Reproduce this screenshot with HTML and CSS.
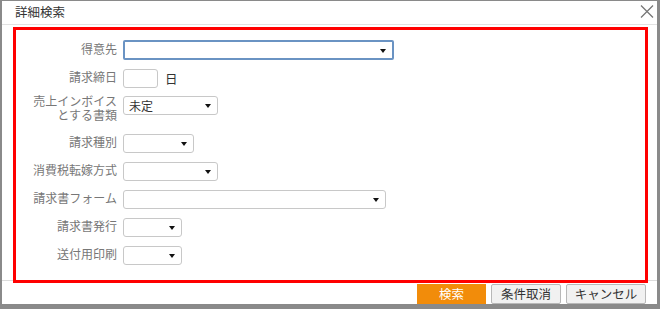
FILE: index.html
```html
<!DOCTYPE html>
<html lang="ja">
<head>
<meta charset="utf-8">
<link rel="stylesheet" href="styles.css">
</head>
<body>
<div class="window">
  <div class="titlebar">
    <span class="title">詳細検索</span>
    <svg class="close" width="14" height="13" viewBox="0 0 14 13"><path d="M1 0.5L13 12.5M13 0.5L1 12.5" stroke="#777" stroke-width="1.3" fill="none"/></svg>
  </div>
  <div class="content">
    <div class="frame">
      <div class="row">
        <div class="label">得意先</div>
        <div class="select focus w270"><span class="val"></span><span class="arrow"></span></div>
      </div>
      <div class="row">
        <div class="label">請求締日</div>
        <div class="input w34"></div>
        <span class="unit">日</span>
      </div>
      <div class="row tall">
        <div class="label two"><span class="line">売上インボイス</span><span class="line">とする書類</span></div>
        <div class="select w94"><span class="val">未定</span><span class="arrow"></span></div>
      </div>
      <div class="row">
        <div class="label">請求種別</div>
        <div class="select w70"><span class="val"></span><span class="arrow"></span></div>
      </div>
      <div class="row">
        <div class="label">消費税転嫁方式</div>
        <div class="select w94"><span class="val"></span><span class="arrow"></span></div>
      </div>
      <div class="row">
        <div class="label">請求書フォーム</div>
        <div class="select w262"><span class="val"></span><span class="arrow"></span></div>
      </div>
      <div class="row">
        <div class="label">請求書発行</div>
        <div class="select w58"><span class="val"></span><span class="arrow"></span></div>
      </div>
      <div class="row">
        <div class="label">送付用印刷</div>
        <div class="select w58"><span class="val"></span><span class="arrow"></span></div>
      </div>
    </div>
  </div>
  <div class="footer">
    <button class="btn primary">検索</button>
    <button class="btn">条件取消</button>
    <button class="btn wide">キャンセル</button>
  </div>
</div>
</body>
</html>
```
FILE: styles.css
```css
* { box-sizing: border-box; }
html, body { margin: 0; padding: 0; }
body {
  width: 660px;
  height: 309px;
  overflow: hidden;
  background: #fff;
  font-family: "Noto Sans CJK JP", "Noto Sans", sans-serif;
}
.window {
  width: 660px;
  height: 309px;
  border-top: 1px solid #8a8a8a;
  border-left: 2px solid #8a8a8a;
  border-right: 3px solid #8a8a8a;
  border-bottom: 5px solid #8a8a8a;
  display: flex;
  flex-direction: column;
  background: #fff;
  overflow: hidden;
}
.titlebar {
  height: 24px;
  border-bottom: 1px solid #e2e2e2;
  display: flex;
  align-items: center;
  justify-content: space-between;
  padding: 0 3px 0 13px;
  flex-shrink: 0;
}
.title {
  font-size: 12.5px;
  color: #333;
  line-height: 14px;
  margin-top: -2px;
}
.close { margin-top: -3px; }
.content {
  height: 256px;
  border-bottom: 1px solid #dcdcdc;
  padding: 2px 9px 0 11px;
  flex-shrink: 0;
}
.frame {
  height: 256px;
  border: 3px solid #ff0000;
  padding: 10px 0 0 0;
  display: flex;
  flex-direction: column;
  gap: 8px;
}
.row {
  display: flex;
  align-items: center;
  height: 20px;
}
.row.tall {
  height: 29px;
  align-items: flex-start;
}
.label {
  width: 101px;
  text-align: right;
  font-family: "Liberation Sans", "Noto Sans CJK JP", sans-serif;
  font-size: 12px;
  line-height: 14px;
  color: #777;
  margin-right: 6px;
  flex-shrink: 0;
}
.label.two {
  display: flex;
  flex-direction: column;
  align-items: flex-end;
  margin-top: 0;
}
.line {
  display: block;
  line-height: 13.5px;
}
.select, .input {
  height: 19px;
  border: 1px solid #c8c8c8;
  border-radius: 3px;
  background: #fff;
  display: flex;
  align-items: center;
  justify-content: space-between;
  padding: 0 6px 0 5px;
  flex-shrink: 0;
}
.select.focus {
  height: 20px;
  border: 2px solid #6a93c3;
  border-radius: 2px;
}
.val {
  font-size: 12px;
  line-height: 14px;
  color: #333;
}
.arrow {
  width: 0;
  height: 0;
  border-left: 3.5px solid transparent;
  border-right: 3.5px solid transparent;
  border-top: 4px solid #111;
  margin-top: 1px;
}
.w270 { width: 271px; }
.w34 { width: 35px; }
.w94 { width: 95px; }
.w70 { width: 71px; }
.w262 { width: 263px; }
.w58 { width: 59px; }
.unit {
  font-size: 12.5px;
  color: #333;
  margin-left: 7px;
}
.footer {
  flex: 1;
  display: flex;
  justify-content: flex-end;
  align-items: flex-start;
  gap: 5px;
  padding: 3px 11px 0 0;
}
.btn {
  height: 20px;
  padding: 0;
  width: 70px;
  font-family: "Noto Sans CJK JP", "Noto Sans", sans-serif;
  font-size: 12.5px;
  line-height: 16px;
  color: #333;
  background: #f1f1f1;
  border: 1px solid #b8b8b8;
  border-radius: 2px;
}
.btn.primary {
  width: 69px;
  background: #f28c0a;
  border-color: #f28c0a;
  color: #fff;
  border-radius: 0;
}
.btn.wide { width: 80px; }
```
